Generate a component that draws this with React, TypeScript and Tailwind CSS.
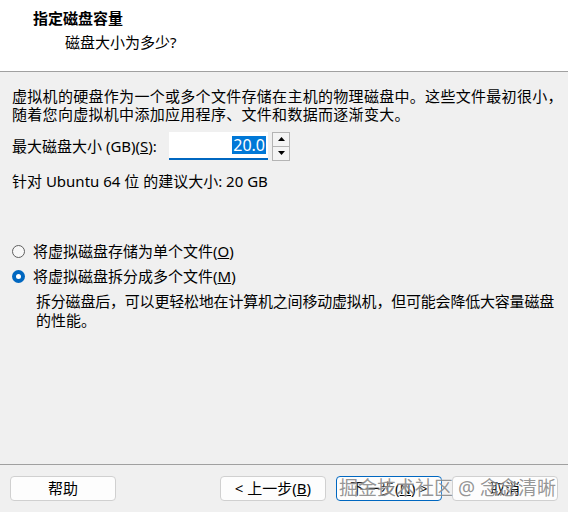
import React from 'react';

const font = "font-['Noto_Sans','Noto_Sans_CJK_SC',sans-serif]";

function Radio({ checked }: { checked?: boolean }) {
  return checked ? (
    <span className="flex h-[13px] w-[13px] shrink-0 items-center justify-center rounded-full bg-[#0067c0]">
      <span className="h-[5px] w-[5px] rounded-full bg-white" />
    </span>
  ) : (
    <span className="h-[13px] w-[13px] shrink-0 rounded-full border border-[#5f5f5f] bg-[#f7f7f7]" />
  );
}

function Button({ children, primary }: { children: React.ReactNode; primary?: boolean }) {
  return (
    <button
      className={
        primary
          ? 'flex h-[25px] w-[106px] items-center justify-center rounded-[4px] border border-[#0067c0] bg-[#fdfdfd] text-[15px] text-black'
          : 'flex h-[25px] w-[106px] items-center justify-center rounded-[4px] border border-[#d0d0d0] bg-[#fdfdfd] text-[15px] text-black'
      }
    >
      {children}
    </button>
  );
}

export default function App() {
  return (
    <div className={`relative flex h-[512px] w-[568px] flex-col overflow-hidden bg-[#f0f0f0] text-black ${font}`}>
      {/* Header */}
      <header className="flex h-[72px] flex-col border-b border-[#a0a0a0] bg-white">
        <h1 className="pl-[33px] pt-[8px] text-[15px] font-bold leading-[20px]">指定磁盘容量</h1>
        <p className="pl-[65px] pt-[4px] text-[15px] leading-[20px]">磁盘大小为多少?</p>
      </header>

      {/* Body */}
      <div className="flex flex-1 flex-col px-[12px] pt-[15px]">
        <p className="whitespace-nowrap text-[15px] leading-[18px] tracking-[0.3px]">
          虚拟机的硬盘作为一个或多个文件存储在主机的物理磁盘中。这些文件最初很小，
        </p>
        <p className="whitespace-nowrap text-[15px] leading-[18px] tracking-[0.3px]">
          随着您向虚拟机中添加应用程序、文件和数据而逐渐变大。
        </p>

        <div className="mt-[9px] flex h-[28px] items-center">
          <span className="w-[157px] whitespace-nowrap text-[15px]">
            最大磁盘大小 (GB)(<span className="underline">S</span>):
          </span>
          <div className="flex h-[28px] w-[99px] items-center justify-end border-b-2 border-[#0067c0] bg-white pr-[2px]">
            <span className="bg-[#0078d7] px-[1px] text-[16px] leading-[18px] text-white">20.0</span>
          </div>
          <div className="ml-[4px] flex h-[29px] w-[18px] flex-col border border-[#b4b4b4] bg-[#f4f4f4]">
            <span className="flex flex-1 items-center justify-center border-b border-[#b4b4b4]">
              <svg width="7" height="4" viewBox="0 0 7 4">
                <path d="M0 4 L3.5 0 L7 4 Z" fill="#000" />
              </svg>
            </span>
            <span className="flex flex-1 items-center justify-center">
              <svg width="7" height="4" viewBox="0 0 7 4">
                <path d="M0 0 L3.5 4 L7 0 Z" fill="#000" />
              </svg>
            </span>
          </div>
        </div>

        <p className="mt-[12px] text-[15px] leading-[18px]">针对 Ubuntu 64 位 的建议大小: 20 GB</p>

        <div className="mt-[52px] flex flex-col gap-[7px]">
          <label className="flex h-[18px] items-center gap-[8px] text-[15px]">
            <Radio />
            <span>
              将虚拟磁盘存储为单个文件(<span className="underline">O</span>)
            </span>
          </label>
          <label className="flex h-[18px] items-center gap-[8px] text-[15px]">
            <Radio checked />
            <span>
              将虚拟磁盘拆分成多个文件(<span className="underline">M</span>)
            </span>
          </label>
        </div>

        <div className="mt-[7px] pl-[24px] text-[15px] leading-[19px]">
          <p className="whitespace-nowrap tracking-[-0.2px]">
            拆分磁盘后，可以更轻松地在计算机之间移动虚拟机，但可能会降低大容量磁盘
          </p>
          <p>的性能。</p>
        </div>
      </div>

      {/* Footer */}
      <footer className="flex h-[48px] items-start border-t border-[#a0a0a0] px-[10px] pt-[11px]">
        <Button>帮助</Button>
        <div className="ml-auto flex gap-[10px]">
          <Button>
            &lt; 上一步(<span className="underline">B</span>)
          </Button>
          <Button primary>
            下一步(<span className="underline">N</span>) &gt;
          </Button>
          <Button>取消</Button>
        </div>
      </footer>

      {/* Watermark */}
      <div className="pointer-events-none absolute bottom-[12px] right-[12px] whitespace-nowrap text-[19px] leading-[24px] text-[#7a7a7a]/80 [text-shadow:0_0_2px_#fff]">
        掘金技术社区 @ 念念清晰
      </div>
    </div>
  );
}
